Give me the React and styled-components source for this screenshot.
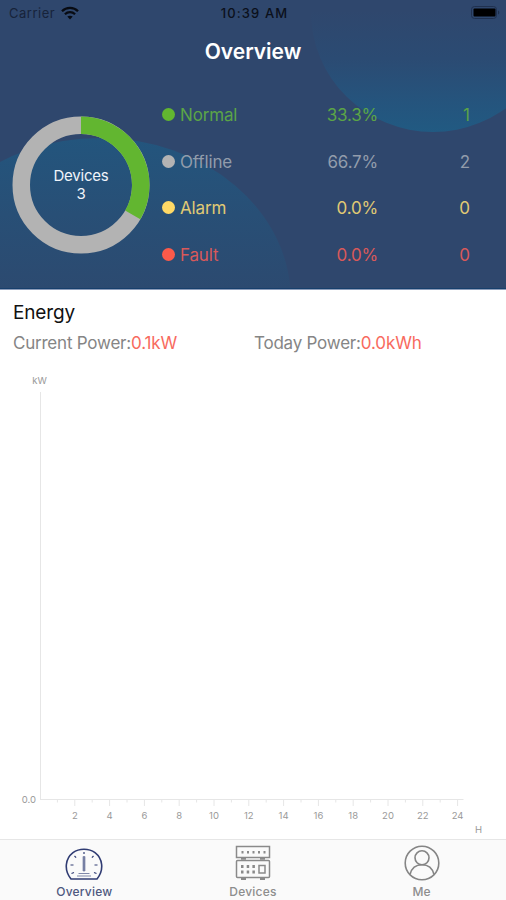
import React from "react";
import styled, { createGlobalStyle } from "styled-components";

const statusList = [
  { name: "Normal", percent: "33.3%", count: 1, dot: "#62b630", color: "#5ba447" },
  { name: "Offline", percent: "66.7%", count: 2, dot: "#b3b3b3", color: "#929cab" },
  { name: "Alarm", percent: "0.0%", count: 0, dot: "#ffd966", color: "#e0ca74" },
  { name: "Fault", percent: "0.0%", count: 0, dot: "#fc5a4a", color: "#d9595a" },
];

const hours = Array.from({ length: 24 }, (_, i) => i + 1);

const WifiIcon = () => (
  <svg width="18" height="14" viewBox="0 0 18 14" fill="none" stroke="#080b12">
    <path d="M1 5.2C5.4.8 12.6.8 17 5.2" strokeWidth="2.3" />
    <path d="M3.9 8.2c2.9-2.8 7.3-2.8 10.2 0" strokeWidth="2.2" />
    <path d="M9 13.4 6.3 10.6c1.500-1.300 3.900-1.300 5.400 0z" fill="#080b12" stroke="none" />
  </svg>
);

const BatteryIcon = () => (
  <svg width="29" height="14" viewBox="0 0 29 14">
    <rect x="0.5" y="0.5" width="25" height="12" rx="3" fill="none" stroke="#20314f" />
    <rect x="2.5" y="2.5" width="22" height="8" rx="1" fill="#000" />
    <path d="M27 4.5c1.8.6 1.8 3.4 0 4z" fill="#20314f" />
  </svg>
);

const HeaderShapes = () => (
  <Shapes viewBox="0 0 506 288">
    <defs>
      <linearGradient id="topShape" gradientUnits="userSpaceOnUse" x1="0" y1="10" x2="0" y2="132">
        <stop offset="0" stopColor="#2f476d" />
        <stop offset="0.4" stopColor="#2b4b73" />
        <stop offset="0.75" stopColor="#25547d" />
        <stop offset="1" stopColor="#215a82" />
      </linearGradient>
      <linearGradient id="leftShape" gradientUnits="userSpaceOnUse" x1="0" y1="139" x2="0" y2="289">
        <stop offset="0" stopColor="#23557d" />
        <stop offset="0.5" stopColor="#284f76" />
        <stop offset="1" stopColor="#2c4a70" />
      </linearGradient>
    </defs>
    <ellipse cx="433" cy="12" rx="122" ry="120" fill="url(#topShape)" />
    <ellipse cx="100" cy="300" rx="191" ry="162" fill="url(#leftShape)" />
  </Shapes>
);

const GaugeIcon = () => (
  <svg width="38" height="34" viewBox="0 0 38 34" fill="none" stroke="#303c73">
    <path d="M6 32C-1.500 22.500 .5 11.500 8 5.700c6-4.600 16-4.600 22 0 7.500 5.800 9.500 16.800 2 26.300z" strokeWidth="1.600" />
    <path d="M18 9.500h2V24h-2z" fill="#7780a3" stroke="#7780a3" strokeWidth="0.700" />
    <path d="M13.500 26.500h11M12 29h14" strokeWidth="1" stroke="#8088a9" />
    <path d="M19 5v2M9.500 9l1.600 1.600M28.500 9l-1.600 1.600M5.500 18h3M32.500 18h-3M6.500 26.500l2.500-1M31.500 26.500l-2.500-1" strokeWidth="1.200" />
  </svg>
);

const DevicesIcon = () => (
  <svg width="36" height="36" viewBox="0 0 36 36" fill="none" stroke="#8a8a8a" strokeWidth="1.500">
    <rect x="1.500" y="1.500" width="33" height="11" />
    <rect x="1.500" y="15.500" width="33" height="17" rx="1" />
    <path d="M6 13.800h5M25 13.800h5M6 34h5M25 34h5" strokeWidth="2" />
    <path d="M6.500 7.200h24" strokeWidth="2.600" strokeDasharray="2 3.500" />
    <path d="M6 21.500h14M6 27h14" strokeWidth="2.800" strokeDasharray="2.500 3.200" />
    <rect x="24" y="20.500" width="6" height="7.500" />
  </svg>
);

const UserIcon = () => (
  <svg width="36" height="36" viewBox="0 0 36 36" fill="none" stroke="#858585" strokeWidth="1.600">
    <circle cx="18" cy="18" r="16.800" />
    <circle cx="18" cy="12.800" r="7" />
    <path d="M6 29.500c1.500-6 6-9.700 12-9.700s10.500 3.700 12 9.700" />
  </svg>
);

const DeviceChart = () => (
  <Donut>
    <svg width="138" height="138" viewBox="0 0 138 138" fill="none" strokeWidth="17.500">
      <circle cx="69" cy="69" r="59.750" stroke="#b3b3b3" />
      <path d="M69 9.250A59.750 59.750 0 0 1 120.750 98.870" stroke="#62b630" />
    </svg>
    <DonutLabel>
      <span>Devices</span>
      <span>3</span>
    </DonutLabel>
  </Donut>
);

const PowerChart = () => (
  <Chart viewBox="0 0 506 470">
    <text x="39.500" y="14" textAnchor="middle">kW</text>
    <path d="M40.500 22v408M40 429.500h423.500" stroke="#e6e6e6" />
    <text x="36" y="433" textAnchor="end">0.0</text>
    {hours.map((h) => {
      const x = 40 + h * 17.4;
      return (
        <g key={h}>
          <path d={`M${x} 430v${h % 2 ? 2.5 : 6}`} stroke="#e6e6e6" />
          {h % 2 === 0 && (
            <text x={x} y="448.500" textAnchor="middle">{h}</text>
          )}
        </g>
      );
    })}
    <text x="478.500" y="462.500" textAnchor="middle">H</text>
  </Chart>
);

export default function App() {
  return (
    <>
      <GlobalStyle />
      <Page>
        <Header>
          <HeaderShapes />
          <StatusBar>
            <Carrier>
              Carrier
              <WifiIcon />
            </Carrier>
            <Time>10:39 AM</Time>
            <Battery>
              <BatteryIcon />
            </Battery>
          </StatusBar>
          <Title>Overview</Title>
          <Summary>
            <DeviceChart />
            <StatusList>
              {statusList.map((s) => (
                <StatusRow key={s.name} $color={s.color}>
                  <Dot $color={s.dot} />
                  <StatusName>{s.name}</StatusName>
                  <Percent>{s.percent}</Percent>
                  <Count>{s.count}</Count>
                </StatusRow>
              ))}
            </StatusList>
          </Summary>
        </Header>
        <Energy>
          <EnergyTitle>Energy</EnergyTitle>
          <PowerRow>
            <Power>
              Current Power:<Value>0.1kW</Value>
            </Power>
            <Power>
              Today Power:<Value>0.0kWh</Value>
            </Power>
          </PowerRow>
          <PowerChart />
        </Energy>
        <TabBar>
          <Tab $active>
            <GaugeIcon />
            <span>Overview</span>
          </Tab>
          <Tab>
            <DevicesIcon />
            <span>Devices</span>
          </Tab>
          <Tab>
            <UserIcon />
            <span>Me</span>
          </Tab>
        </TabBar>
      </Page>
    </>
  );
}

const GlobalStyle = createGlobalStyle`
  body {
    margin: 0;
  }
  * {
    box-sizing: border-box;
  }
`;

const Page = styled.div`
  display: flex;
  flex-direction: column;
  width: 506px;
  height: 900px;
  overflow: hidden;
  background: #fff;
  font-family: Inter, "Liberation Sans", sans-serif;
`;

const Header = styled.header`
  position: relative;
  isolation: isolate;
  height: 290px;
  flex: none;
  background: #2f476d;
  border-bottom: 1px solid #8d9dba;
  box-shadow: inset 0 -1px #173f6c;
`;

const Shapes = styled.svg`
  position: absolute;
  z-index: -1;
  left: 0;
  top: 0;
  width: 506px;
  height: 288px;
`;

const StatusBar = styled.div`
  display: grid;
  grid-template-columns: 1fr auto 1fr;
  align-items: center;
  height: 26px;
  padding: 0 6px 0 9px;
  color: #0b101b;
  font-size: 13px;
`;

const Carrier = styled.div`
  display: flex;
  align-items: center;
  gap: 6px;
  letter-spacing: 0.5px;
  color: #17233a;
`;

const Time = styled.div`
  font-weight: 500;
  letter-spacing: 1.1px;
`;

const Battery = styled.div`
  display: flex;
  justify-content: flex-end;
`;

const Title = styled.h1`
  margin: 12px 0 0;
  text-align: center;
  color: #fff;
  font-size: 21px;
  line-height: 28px;
  font-weight: 600;
`;

const Summary = styled.div`
  display: flex;
  padding: 25px 36px 0 12px;
`;

const Donut = styled.div`
  display: grid;
  place-items: center;
  width: 138px;
  height: 138px;
  margin-top: 24.5px;

  > * {
    grid-area: 1 / 1;
  }
`;

const DonutLabel = styled.div`
  display: flex;
  flex-direction: column;
  align-items: center;
  color: #f0f4fa;
  font-size: 15px;
  line-height: 18px;
  letter-spacing: -0.2px;
`;

const StatusList = styled.div`
  flex: 1;
  padding-left: 11.5px;
`;

const StatusRow = styled.div`
  display: grid;
  grid-template-columns: 18.5px 1fr 90px 92px;
  align-items: center;
  height: 46.7px;
  color: ${(p) => p.$color};
  font-size: 17px;
`;

const Dot = styled.i`
  width: 13px;
  height: 13px;
  border-radius: 50%;
  background: ${(p) => p.$color};
`;

const StatusName = styled.span`
  padding-top: 1px;
  letter-spacing: -0.15px;
`;

const Percent = styled.span`
  padding-top: 1px;
  text-align: right;
  letter-spacing: -0.2px;
`;

const Count = styled.span`
  padding-top: 1px;
  text-align: right;
`;

const Energy = styled.main`
  flex: 1;
  min-height: 0;
`;

const EnergyTitle = styled.h2`
  margin: 10px 0 0 13px;
  color: #111;
  font-size: 19px;
  line-height: 26px;
  font-weight: 400;
  letter-spacing: -0.15px;
`;

const PowerRow = styled.div`
  display: grid;
  grid-template-columns: 241px 1fr;
  padding: 5px 0 0 13px;
`;

const Power = styled.div`
  color: #858585;
  font-size: 17px;
  line-height: 24px;
  letter-spacing: -0.22px;
`;

const Value = styled.span`
  color: #f86a5e;
  letter-spacing: -0.1px;
`;

const Chart = styled.svg`
  display: block;
  width: 506px;
  height: 470px;
  margin-top: 15px;

  text {
    fill: #999;
    font-size: 9.5px;
  }
`;

const TabBar = styled.nav`
  display: grid;
  grid-template-columns: repeat(3, 1fr);
  flex: none;
  height: 61px;
  background: #fafafa;
  border-top: 1px solid #e6e6e6;
`;

const Tab = styled.div`
  display: flex;
  flex-direction: column;
  align-items: center;
  justify-content: flex-end;
  gap: 3px;
  padding-bottom: 1px;
  color: ${(p) => (p.$active ? "#4e587f" : "#8d8d8d")};
  font-size: 12px;
  line-height: 15px;
  font-weight: 500;
  letter-spacing: 0.2px;
`;
